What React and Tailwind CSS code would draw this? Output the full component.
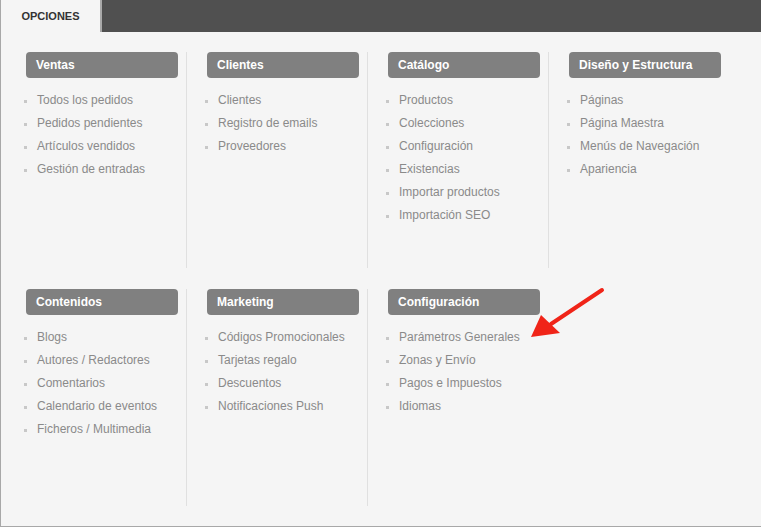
const groups = [
  [
    { title: "Ventas", items: ["Todos los pedidos", "Pedidos pendientes", "Artículos vendidos", "Gestión de entradas"] },
    { title: "Clientes", items: ["Clientes", "Registro de emails", "Proveedores"] },
    { title: "Catálogo", items: ["Productos", "Colecciones", "Configuración", "Existencias", "Importar productos", "Importación SEO"] },
    { title: "Diseño y Estructura", items: ["Páginas", "Página Maestra", "Menús de Navegación", "Apariencia"] }
  ],
  [
    { title: "Contenidos", items: ["Blogs", "Autores / Redactores", "Comentarios", "Calendario de eventos", "Ficheros / Multimedia"] },
    { title: "Marketing", items: ["Códigos Promocionales", "Tarjetas regalo", "Descuentos", "Notificaciones Push"] },
    { title: "Configuración", items: ["Parámetros Generales", "Zonas y Envío", "Pagos e Impuestos", "Idiomas"] }
  ]
];

const Column = ({ group, first }) => (
  <div className={first ? "w-[160px] shrink-0" : "w-[181px] shrink-0 border-l border-[#e0e0e0] pl-[20px]"}>
    <div className="flex h-[26px] w-[152px] items-center rounded-[4px] bg-[#808080] pl-[10px] text-[12px] font-bold text-white">
      {group.title}
    </div>
    <ul className="-ml-[2px] mt-[11px]">
      {group.items.map((item) => (
        <li key={item} className="flex items-center text-[12px] leading-[23px] text-[#8a8a8a]">
          <span className="mr-[10px] mt-[2px] h-[3px] w-[3px] shrink-0 bg-[#c8c8c8]" />
          {item}
        </li>
      ))}
    </ul>
  </div>
);

export default function App() {
  return (
    <div className="relative h-[528px] w-[761px] overflow-hidden bg-white font-['Liberation_Sans',Arial,sans-serif]">
      <div className="h-[527px] border-b border-l border-[#a8a8a8] bg-[#f5f5f5]">
        <div className="flex h-[32px]">
          <div className="flex w-[101px] items-center justify-center border-r-2 border-[#a9a9a9] text-[11px] font-bold text-[#333]">
            OPCIONES
          </div>
          <div className="flex-1 bg-[#505050]" />
        </div>

        <div className="pl-[25px] pt-[20px]">
          {groups.map((row, i) => (
            <div key={i} className={i === 0 ? "flex h-[216px]" : "mt-[21px] flex h-[217px]"}>
              {row.map((group, j) => (
                <Column key={group.title} group={group} first={j === 0} />
              ))}
            </div>
          ))}
        </div>
      </div>

      <svg className="absolute left-[525px] top-[285px]" width="85" height="60" viewBox="0 0 85 60">
        <line x1="77" y1="5" x2="26" y2="39" stroke="#f02418" strokeWidth="4" strokeLinecap="round" />
        <polygon points="6,52 16,30 35,48" fill="#f02418" />
      </svg>
    </div>
  );
}
